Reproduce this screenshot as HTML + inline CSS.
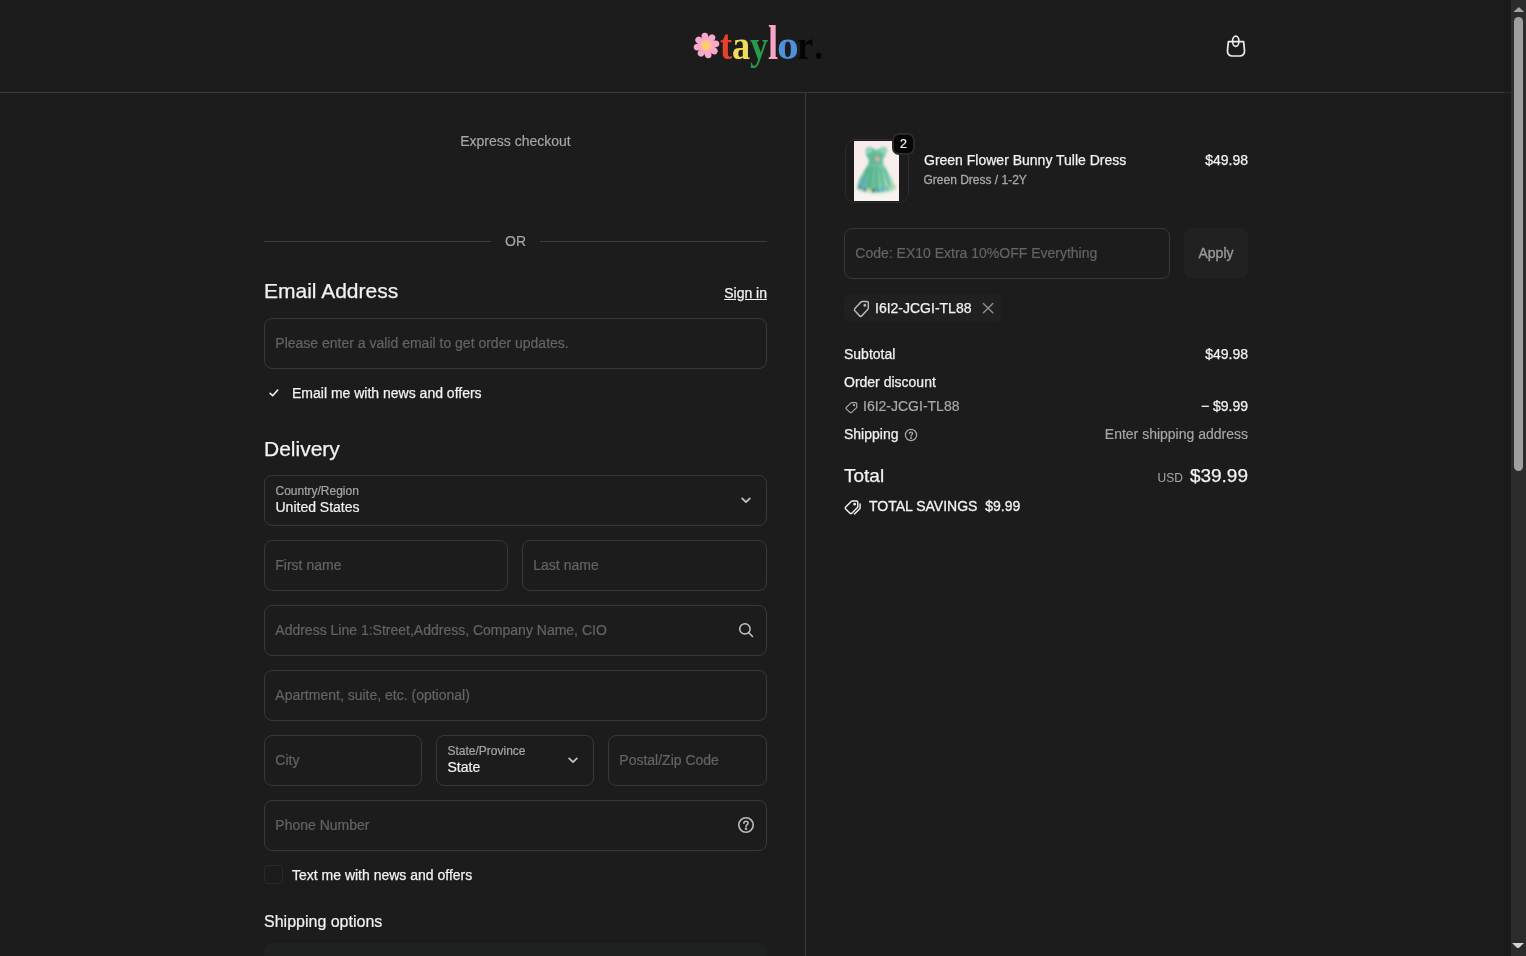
<!DOCTYPE html>
<html lang="en">
<head>
<meta charset="utf-8">
<title>Checkout - taylor.</title>
<style>
*{box-sizing:border-box;margin:0;padding:0}
html,body{width:1526px;height:956px;overflow:hidden;background:#1c1c1c}
body{font-family:"Liberation Sans",Arial,Helvetica,sans-serif;color:#f2f2f2;font-size:14px;position:relative}
.abs{position:absolute;white-space:nowrap}
#page{position:absolute;left:0;top:0;width:1526px;height:956px;overflow:hidden;will-change:transform}
/* header */
#hdr{position:absolute;left:0;top:0;width:1504px;height:93px;border-bottom:1px solid #3b3b3b}
#vline{position:absolute;left:805px;top:93px;width:1px;height:863px;background:#3b3b3b}
#logo{position:absolute;left:692px;top:21.5px;height:48px;white-space:nowrap;font-family:"Liberation Serif","Times New Roman",serif;font-weight:bold;font-size:39.5px;line-height:48px}
#logo svg{position:absolute;left:.5px;top:9.5px}
#logo .lt{position:absolute;top:0;display:block;transform:scaleX(.92);transform-origin:0 0}
#logo .tall{transform:scale(.92,1.22);transform-origin:0 36.3px}
/* scrollbar */
#sb{position:absolute;left:1511px;top:0;width:15px;height:956px;background:#2c2c2c}
#sbthumb{position:absolute;left:3px;top:17.3px;width:9.4px;height:453.4px;border-radius:5px;background:#9f9f9f}
/* fields */
.fld{position:absolute;height:51px;border:1px solid #383838;border-radius:8px;background:#1c1c1c}
.ph{position:absolute;left:10.3px;top:0;line-height:49px;font-size:14px;color:#646464;white-space:nowrap;-webkit-text-stroke:0.2px #646464}
.lbl{position:absolute;left:10.5px;top:8px;font-size:12px;line-height:14px;color:#a6a6a6;white-space:nowrap;-webkit-text-stroke:0.2px #a6a6a6}
.val{position:absolute;left:10.5px;top:23px;font-size:14px;line-height:17px;color:#f2f2f2;white-space:nowrap;-webkit-text-stroke:0.2px #f2f2f2}
h2{position:absolute;font-weight:normal;font-size:21px;line-height:26px;color:#f2f2f2;white-space:nowrap;-webkit-text-stroke:0.25px #f2f2f2}
.t14{position:absolute;font-size:14px;line-height:18px;white-space:nowrap;color:#f2f2f2;-webkit-text-stroke:0.25px currentColor}
.r{text-align:right}
.muted{color:#a8a8a8}
</style>
</head>
<body>
<div id="page">

<!-- HEADER -->
<div id="hdr"></div>
<div id="logo">
  <svg width="27" height="29" viewBox="0 0 26 28">
    <defs><radialGradient id="fc"><stop offset="0" stop-color="#ffd45a"/><stop offset=".55" stop-color="#fdc970"/><stop offset="1" stop-color="#f9a8cc"/></radialGradient></defs>
    <g fill="#f9a8cc"><ellipse cx="11.51" cy="5.53" rx="3.9" ry="3.3" transform="rotate(-100 11.51 5.53)"/><ellipse cx="17.93" cy="6.96" rx="3.9" ry="3.3" transform="rotate(-55 17.93 6.96)"/><ellipse cx="21.47" cy="12.51" rx="3.9" ry="3.3" transform="rotate(-10 21.47 12.51)"/><ellipse cx="20.04" cy="18.93" rx="3.9" ry="3.3" transform="rotate(35 20.04 18.93)"/><ellipse cx="14.49" cy="22.47" rx="3.9" ry="3.3" transform="rotate(80 14.49 22.47)"/><ellipse cx="8.07" cy="21.04" rx="3.9" ry="3.3" transform="rotate(125 8.07 21.04)"/><ellipse cx="4.53" cy="15.49" rx="3.9" ry="3.3" transform="rotate(170 4.53 15.49)"/><ellipse cx="5.96" cy="9.07" rx="3.9" ry="3.3" transform="rotate(215 5.96 9.07)"/><circle cx="13" cy="14" r="6.6"/></g>
    <circle cx="12.6" cy="14.2" r="6" fill="url(#fc)"/>
  </svg>
  <span class="lt" style="left:28px;color:#e8402f;transform:scale(.92,1.08);transform-origin:0 36.3px">t</span><span class="lt" style="left:39.5px;color:#f0dc55">a</span><span class="lt" style="left:57.5px;color:#2a9a48">y</span><span class="lt tall" style="left:75.5px;color:#f7a6c6">l</span><span class="lt" style="left:84.5px;color:#4f8fdc;transform:scaleX(1.1)">o</span><span class="lt" style="left:105px;color:#050505">r</span><span class="lt" style="left:121.5px;color:#050505">.</span>
</div>
<svg class="abs" style="left:1225px;top:34px" width="22" height="24" viewBox="0 0 22 24" fill="none" stroke="#ebebeb" stroke-width="1.7" stroke-linecap="round" stroke-linejoin="round">
  <path d="M3.4 7.6h15.2l.9 8.6c.4 3.4-1.6 5.8-4.6 5.8H7.1c-3 0-5-2.4-4.6-5.8z"/>
  <ellipse cx="10.75" cy="7.2" rx="3.2" ry="5.1"/>
</svg>

<div id="vline"></div>

<!-- LEFT COLUMN -->
<div class="t14 muted" style="left:264px;width:503px;top:132px;text-align:center;-webkit-text-stroke:0.15px #a8a8a8">Express checkout</div>
<div class="abs" style="left:264px;top:241px;width:227px;height:1px;background:#3d3d3d"></div>
<div class="abs" style="left:540px;top:241px;width:227px;height:1px;background:#3d3d3d"></div>
<div class="t14 muted" style="left:264px;width:503px;top:232px;text-align:center;-webkit-text-stroke:0.15px #a8a8a8">OR</div>

<h2 style="left:264px;top:278px">Email Address</h2>
<div class="t14 r" style="left:567px;width:200px;top:284px;text-decoration:underline">Sign in</div>
<div class="fld" style="left:264px;top:318px;width:503px"><span class="ph">Please enter a valid email to get order updates.</span></div>
<svg class="abs" style="left:268px;top:388px" width="12" height="10" viewBox="0 0 12 10" fill="none" stroke="#f2f2f2" stroke-width="1.6" stroke-linecap="round" stroke-linejoin="round"><path d="M2.1 5.3L4.6 7.8 9.75 2"/></svg>
<div class="t14" style="left:292px;top:384px">Email me with news and offers</div>

<h2 style="left:264px;top:436px">Delivery</h2>
<div class="fld" style="left:264px;top:475px;width:503px"><span class="lbl">Country/Region</span><span class="val">United States</span>
  <svg class="abs" style="left:475px;top:20px" width="12" height="10" viewBox="0 0 12 10" fill="none" stroke="#c6c6c6" stroke-width="1.7" stroke-linecap="round" stroke-linejoin="round"><path d="M2.15 2.3L6 6.15 9.85 2.3"/></svg>
</div>
<div class="fld" style="left:264px;top:540px;width:244px"><span class="ph">First name</span></div>
<div class="fld" style="left:522px;top:540px;width:245px"><span class="ph">Last name</span></div>
<div class="fld" style="left:264px;top:605px;width:503px"><span class="ph">Address Line 1:Street,Address, Company Name, CIO</span>
  <svg class="abs" style="left:473px;top:16px" width="16" height="16" viewBox="0 0 16 16" fill="none" stroke="#c6c6c6" stroke-width="1.5" stroke-linecap="round"><circle cx="6.9" cy="6.9" r="5.2"/><path d="M10.8 10.8l3.7 3.7"/></svg>
</div>
<div class="fld" style="left:264px;top:670px;width:503px"><span class="ph">Apartment, suite, etc. (optional)</span></div>
<div class="fld" style="left:264px;top:735px;width:158px"><span class="ph">City</span></div>
<div class="fld" style="left:436px;top:735px;width:158px"><span class="lbl">State/Province</span><span class="val">State</span>
  <svg class="abs" style="left:130px;top:20px" width="12" height="10" viewBox="0 0 12 10" fill="none" stroke="#c6c6c6" stroke-width="1.7" stroke-linecap="round" stroke-linejoin="round"><path d="M2.15 2.3L6 6.15 9.85 2.3"/></svg>
</div>
<div class="fld" style="left:608px;top:735px;width:159px"><span class="ph">Postal/Zip Code</span></div>
<div class="fld" style="left:264px;top:800px;width:503px"><span class="ph">Phone Number</span>
  <svg class="abs" style="left:472px;top:15px" width="18" height="18" viewBox="0 0 18 18" fill="none" stroke="#bcbcbc" stroke-width="1.6" stroke-linecap="round" stroke-linejoin="round"><circle cx="9" cy="9" r="7.2"/><path d="M6.9 7.2c0-1.2.9-2 2.1-2s2.1.8 2.1 1.9c0 1.6-2.1 1.6-2.1 3.3"/><circle cx="9" cy="12.8" r=".5" fill="#c6c6c6"/></svg>
</div>
<div class="abs" style="left:264px;top:865px;width:19px;height:19px;border:1px solid #292929;border-radius:4px;background:#1c1c1c"></div>
<div class="t14" style="left:292px;top:866px">Text me with news and offers</div>
<div class="abs" style="left:264px;top:911.5px;font-size:16px;line-height:20px;color:#f2f2f2;-webkit-text-stroke:0.2px #f2f2f2">Shipping options</div>
<div class="abs" style="left:264px;top:942.5px;width:503px;height:40px;border-radius:8px;background:#1e2120"></div>

<!-- RIGHT COLUMN -->
<div id="rc">
<!-- product -->
<div class="abs" style="left:845px;top:139px;width:64px;height:64px;border:1.5px solid #2c2c2c;border-radius:10px;background:#1c1c1c"></div>
<svg class="abs" style="left:854px;top:141px" width="45" height="60" viewBox="0 0 45 60">
  <defs>
    <filter id="bl" x="-10%" y="-10%" width="120%" height="120%"><feGaussianBlur stdDeviation="0.8"/></filter>
    <linearGradient id="sk" x1="0" x2="1" y1="0" y2="0"><stop offset="0" stop-color="#7fcfb0"/><stop offset=".3" stop-color="#4fb58c"/><stop offset=".55" stop-color="#63c39c"/><stop offset="1" stop-color="#a6dfc8"/></linearGradient>
    <linearGradient id="bgp" x1="0" x2="0" y1="0" y2="1"><stop offset="0" stop-color="#f7ebea"/><stop offset=".8" stop-color="#f7efec"/><stop offset="1" stop-color="#f8f5f2"/></linearGradient>
  </defs>
  <rect width="45" height="60" fill="url(#bgp)"/>
  <g filter="url(#bl)" opacity=".9">
    <path d="M11.5 9c1-3 5-4 7-2l4 2 4-2c2-2 6-1 7 2l-2 6-2.5 4 1 5c4 6 9 15 11 22-6 6-31 6-38 0 2-8 6-16 11-22l1-5-2.5-4z" fill="url(#sk)"/>
    <path d="M11.5 8.5c1-3 5-3.5 7-1.5l-1.5 5-4 1zM26.5 7c2-2 6-1.5 7 1.5l-2 5-4-1z" fill="#86d4b6"/>
    <path d="M16 12h13l-1.5 11h-10z" fill="#55b38f"/>
    <ellipse cx="23.5" cy="18" rx="2.4" ry="2.8" fill="#dca696" opacity=".85"/>
    <path d="M15 26l-8 19M18.5 26l-4 22M22.5 25v24M26.5 26l3 22M30 27l6 18" stroke="#3a9f78" stroke-width="1.8" fill="none" opacity=".75"/>
    <path d="M6 36l-3 10 8 3 3-12z" fill="#4f9fb8" opacity=".55"/>
    <path d="M3 45c7 6 31 6 38 0l1 3c-8 6-32 6-40 0z" fill="#a9e0cb"/>
    <circle cx="6" cy="46.5" r="1.9" fill="#4d8a6a"/><circle cx="10.5" cy="48.5" r="1.9" fill="#3f7fa8"/><circle cx="15" cy="49.5" r="1.9" fill="#e2d682"/>
    <circle cx="19.5" cy="49.5" r="1.9" fill="#2f6f55"/><circle cx="24" cy="49.5" r="1.9" fill="#3f93a6"/><circle cx="28.5" cy="49" r="1.9" fill="#5a9fd0"/>
    <circle cx="33" cy="48" r="1.9" fill="#68b78f"/><circle cx="37" cy="46.5" r="1.7" fill="#8ccf9f"/><circle cx="40.5" cy="45" r="1.5" fill="#d3c47a"/>
  </g>
</svg>
<div class="abs" style="left:892px;top:133px;width:23px;height:22px;border:2px solid #2a2a2a;border-radius:7px;background:#060606"></div>
<div class="abs" style="left:892px;top:133px;width:23px;height:22px;text-align:center;font-size:12.5px;line-height:22px;color:#f2f2f2;-webkit-text-stroke:0.2px #f2f2f2">2</div>
<div class="t14" style="left:924px;top:151px">Green Flower Bunny Tulle Dress</div>
<div class="abs muted" style="left:923.5px;top:173px;font-size:12px;line-height:15px;-webkit-text-stroke:0.3px #a8a8a8">Green Dress / 1-2Y</div>
<div class="t14 r" style="left:1148px;width:100px;top:151px">$49.98</div>

<!-- discount input -->
<div class="fld" style="left:844px;top:228px;width:326px"><span class="ph">Code: EX10 Extra 10%OFF Everything</span></div>
<div class="abs" style="left:1184px;top:228px;width:64px;height:51px;border-radius:8px;background:#212121"></div>
<div class="t14" style="left:1184px;width:64px;top:244px;text-align:center;color:#9a9a9a;-webkit-text-stroke:0.35px #9a9a9a">Apply</div>

<!-- chip -->
<div class="abs" style="left:844px;top:294px;width:157px;height:28px;border-radius:6px;background:#202020"></div>
<svg class="abs tag" style="left:852.3px;top:298.6px" width="18.6" height="20" viewBox="0 0 18 18" preserveAspectRatio="none" fill="none" stroke="#b8b8b8" stroke-width="1.4" stroke-linejoin="round" stroke-linecap="round"><path d="M9.8 2.2h4.6c.8 0 1.4.6 1.4 1.4v4.6c0 .4-.2.8-.4 1l-6 6c-.6.6-1.5 .6-2 0L2.8 10.6c-.6-.6-.6-1.5 0-2l6-6c.3-.3.6-.4 1-.4z"/><circle cx="12.4" cy="5.6" r=".7" fill="#b8b8b8"/></svg>
<div class="t14" style="left:875px;top:299px">I6I2-JCGI-TL88</div>
<svg class="abs" style="left:981px;top:301.3px" width="14" height="14" viewBox="0 0 14 14" fill="none" stroke="#8e8e8e" stroke-width="1.4" stroke-linecap="round"><path d="M2.4 2.4l9.4 9.4M11.8 2.4L2.4 11.8"/></svg>

<!-- totals -->
<div class="t14" style="left:844px;top:345px">Subtotal</div>
<div class="t14 r" style="left:1148px;width:100px;top:345px">$49.98</div>
<div class="t14" style="left:844px;top:373px">Order discount</div>
<svg class="abs tag" style="left:843.5px;top:401px" width="14.5" height="13.5" preserveAspectRatio="none" viewBox="0 0 18 18" fill="none" stroke="#a8a8a8" stroke-width="1.5" stroke-linejoin="round" stroke-linecap="round"><path d="M9.8 2.2h4.6c.8 0 1.4.6 1.4 1.4v4.6c0 .4-.2.8-.4 1l-6 6c-.6.6-1.5 .6-2 0L2.8 10.6c-.6-.6-.6-1.5 0-2l6-6c.3-.3.6-.4 1-.4z"/><circle cx="12.4" cy="5.6" r=".7" fill="#a8a8a8"/></svg>
<div class="t14 muted" style="left:863px;top:397px;-webkit-text-stroke:0.2px #a8a8a8">I6I2-JCGI-TL88</div>
<div class="t14 r" style="left:1148px;width:100px;top:397px">&minus; $9.99</div>
<div class="t14" style="left:844px;top:425px">Shipping</div>
<svg class="abs" style="left:904px;top:428px" width="14" height="14" viewBox="0 0 18 18" fill="none" stroke="#a8a8a8" stroke-width="1.6" stroke-linecap="round" stroke-linejoin="round"><circle cx="9" cy="9" r="7.2"/><path d="M6.9 7.2c0-1.2.9-2 2.1-2s2.1.8 2.1 1.9c0 1.6-2.1 1.6-2.1 3.3"/><circle cx="9" cy="12.8" r=".5" fill="#a8a8a8"/></svg>
<div class="t14 r muted" style="left:1048px;width:200px;top:425px;-webkit-text-stroke:0.15px #a8a8a8">Enter shipping address</div>

<div class="abs" style="left:844px;top:464px;font-size:19px;line-height:23px;color:#f2f2f2;-webkit-text-stroke:0.25px #f2f2f2">Total</div>
<div class="abs r" style="left:1048px;width:200px;top:464px;font-size:19px;line-height:23px;color:#f2f2f2;-webkit-text-stroke:0.25px #f2f2f2"><span style="font-size:12px;color:#a8a8a8;-webkit-text-stroke:0;margin-right:7px">USD</span>$39.99</div>
<svg class="abs" style="left:844.3px;top:498.6px" width="17.7" height="16.8" viewBox="0 0 19 18" fill="none" stroke="#f2f2f2" stroke-width="1.55" stroke-linejoin="round" stroke-linecap="round"><path d="M8.8 2.2h4.6c.8 0 1.4.6 1.4 1.4v4.6c0 .4-.2.8-.4 1l-6 6c-.6.6-1.5 .6-2 0L1.8 10.6c-.6-.6-.6-1.5 0-2l6-6c.3-.3.6-.4 1-.4z"/><circle cx="11.4" cy="5.6" r=".7" fill="#f2f2f2"/><path d="M17.3 5.2v4.3c0 .4-.2.8-.4 1l-5.6 5.6"/></svg>
<div class="t14" style="left:869px;top:497px;-webkit-text-stroke:0.3px #f2f2f2">TOTAL SAVINGS&nbsp; $9.99</div>
</div>

<div class="abs" style="left:1504px;top:0;width:7px;height:956px;background:#1a1a1a"></div><div class="abs" style="left:1504px;top:92px;width:7px;height:1px;background:#2b2b2b"></div>
<!-- SCROLLBAR -->
<div id="sb"><div id="sbthumb"></div>
  <svg class="abs" style="left:1.6px;top:6.8px" width="11.6" height="5.4" viewBox="0 0 9 5" preserveAspectRatio="none"><path d="M4.5 0L9 5H0z" fill="#a3a3a3"/></svg>
  <svg class="abs" style="left:1.2px;top:942.6px" width="12" height="5.8" viewBox="0 0 9 5" preserveAspectRatio="none"><path d="M0 0h9L4.5 5z" fill="#d4d4d4"/></svg>
</div>
</div>
</body>
</html>
